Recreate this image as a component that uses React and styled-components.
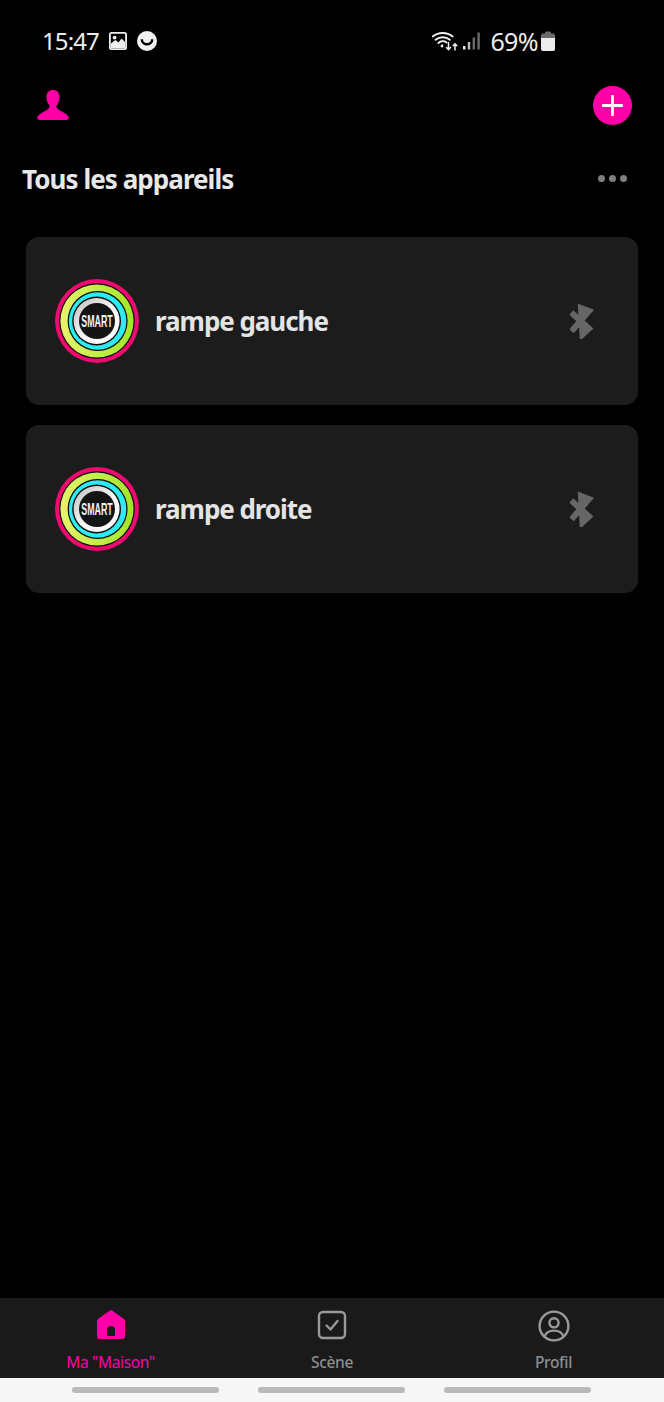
import React from 'react';
import styled, { createGlobalStyle } from 'styled-components';

const Global = createGlobalStyle`
  html, body { margin: 0; padding: 0; background: #000; }
  body { font-family: "Noto Sans", "Open Sans", sans-serif; }
`;
const Page = styled.div`
  width: 664px; height: 1402px; display: flex; flex-direction: column;
  background: #000; overflow: hidden;
`;
const Status = styled.div`
  height: 26px; margin-top: 28px; padding: 0 109px 0 42px;
  display: flex; align-items: center; justify-content: space-between;
  color: #ececec;
`;
const StatusGroup = styled.div`display: flex; align-items: center; gap: ${p => p.$gap || 0}px;`;
const Clock = styled.span`font-size: 24px; font-weight: 400; letter-spacing: -0.9px; margin-right: 10px; line-height: 26px;`;
const Percent = styled.span`font-size: 25px; font-weight: 400; letter-spacing: -0.6px; line-height: 26px; margin: 0 3px 0 10px;`;
const TopBar = styled.div`
  height: 42px; margin-top: 30px; padding: 0 32px 0 37px;
  display: flex; align-items: center; justify-content: space-between;
`;
const AddButton = styled.div`
  width: 39px; height: 39px; border-radius: 50%; background: #ff00a8;
  display: flex; align-items: center; justify-content: center;
`;
const TitleRow = styled.div`
  height: 40px; margin-top: 33px; padding: 0 37px 0 22px;
  display: flex; align-items: center; justify-content: space-between;
`;
const Title = styled.h1`
  margin: 0; font-size: 26px; font-weight: 700; color: #e8e8e8; letter-spacing: -0.95px;
`;
const Dots = styled.div`display: flex; gap: 4px; margin-top: -1px;`;
const Dot = styled.span`width: 7px; height: 7px; border-radius: 50%; background: #7f7f7f;`;
const List = styled.div`
  margin-top: 38px; padding: 0 26px; display: flex; flex-direction: column; gap: 20px;
`;
const Card = styled.div`
  height: 168px; background: #1c1c1c; border-radius: 13px;
  display: flex; align-items: center; padding: 0 44px 0 29px;
`;
const Name = styled.div`
  flex: 1; margin-left: 16px; margin-top: -1px; font-size: 26px; font-weight: 700; color: #e4e4e4; letter-spacing: -1.05px;
`;
const Spacer = styled.div`flex: 1;`;
const Nav = styled.nav`
  height: 80px; background: #1a1a1a; display: grid; grid-template-columns: 221px 222px 221px;
`;
const NavItem = styled.div`
  display: flex; flex-direction: column; align-items: center; padding-top: 12px;
  color: ${p => p.$active ? '#ff00a8' : '#8e8e8e'};
`;
const NavIconBox = styled.div`height: 32px; display: flex; justify-content: center;`;
const NavLabel = styled.span`
  margin-top: 9px; font-size: 15.5px; line-height: 22px; font-weight: ${p => p.$active ? 400 : 500}; letter-spacing: -0.35px;
`;
const Gesture = styled.div`
  height: 24px; background: #f6f6f6; display: flex; justify-content: center; gap: 39px; padding: 9px 1px 0 0; box-sizing: border-box;
`;
const Pill = styled.span`width: 147px; height: 6px; border-radius: 3px; background: #b9b9b9;`;

const PictureIcon = () => (
  <svg width="18" height="18" viewBox="0 0 18 18">
    <rect x="0" y="0" width="18" height="18" rx="2.5" fill="#f0f0f0" />
    <rect x="1.8" y="1.8" width="14.4" height="14.4" rx="0.8" fill="#000" />
    <circle cx="5.6" cy="5.6" r="1.9" fill="#f0f0f0" />
    <path d="M2 14.5 L2 11.5 L6.5 8 L9.5 10.5 L12.5 6.5 L16 10 L16 16 L2 16Z" fill="#f0f0f0" />
  </svg>
);
const SmileIcon = () => (
  <svg width="20" height="20" viewBox="0 0 20 20">
    <circle cx="10" cy="10" r="10" fill="#f0f0f0" />
    <path d="M3.6 8.2 A6.4 6.4 0 0 0 16.4 8.2 L14 8.2 A4 3.8 0 0 1 6 8.2 Z" fill="#000" />
  </svg>
);
const WifiIcon = () => (
  <svg width="26" height="20" viewBox="0 0 26 20" fill="none" stroke="#f0f0f0" strokeLinecap="round">
    <path d="M0.8 5.4 A16 16 0 0 1 20.6 5.4" strokeWidth="1.9" />
    <path d="M3.6 8.8 A11 11 0 0 1 17.8 8.8" strokeWidth="1.9" />
    <path d="M6.4 12 A6.4 6.4 0 0 1 14.6 11.4" strokeWidth="1.9" />
    <circle cx="10" cy="15" r="1.4" fill="#f0f0f0" stroke="none" />
    <path d="M16.5 11.5v7M14.5 16.6l2 2.1 2-2.1" strokeWidth="1.5" />
    <path d="M23 19v-6M21.2 14.8l1.8-2 1.8 2" strokeWidth="1.5" />
  </svg>
);
const SignalWrap = styled.div`display: flex; margin-left: 5px;`;
const SignalIcon = () => (
  <SignalWrap>
    <svg width="17" height="18" viewBox="0 0 17 18">
      <rect x="0" y="14" width="2.4" height="3.5" fill="#ececec" />
      <rect x="4.8" y="10" width="2.4" height="7.5" fill="#bdbdbd" />
      <rect x="9.6" y="5.5" width="2.4" height="12" fill="#6a6a6a" />
      <rect x="14.4" y="0.5" width="2.4" height="17" fill="#6a6a6a" />
    </svg>
  </SignalWrap>
);
const BatteryIcon = () => (
  <svg width="14" height="20" viewBox="0 0 14 20">
    <path d="M4 1.5 a1 1 0 0 1 1-1 h4 a1 1 0 0 1 1 1 v1 h2 a2 2 0 0 1 2 2 V7 H0 V4.5 a2 2 0 0 1 2-2 h2z" fill="#6a6a6a" />
    <path d="M0 7 h14 v11 a2 2 0 0 1-2 2 H2 a2 2 0 0 1-2-2z" fill="#ececec" />
  </svg>
);
const PersonIcon = () => (
  <svg width="32" height="30" viewBox="0 0 32 30">
    <path d="M16 0 C12 0 9.5 2.5 9.5 7 C9.5 11 11 14 12.5 15.5 C13 17.5 11.5 19 9 20.5 C6 22 2 24 0.6 26.5 C-0.3 28.5 1 30 3 30 H29 C31 30 32.3 28.5 31.4 26.5 C30 24 26 22 23 20.5 C20.5 19 19 17.5 19.5 15.5 C21 14 22.5 11 22.5 7 C22.5 2.5 20 0 16 0Z" fill="#ff00a8" />
  </svg>
);
const PlusIcon = () => (
  <svg width="21" height="21" viewBox="0 0 21 21">
    <path d="M10.5 1v19M1 10.5h19" stroke="#fff" strokeWidth="2.8" strokeLinecap="round" />
  </svg>
);
const RingLogo = ({ id }) => (
  <svg width="84" height="84" viewBox="0 0 84 84">
    <defs>
      <linearGradient id={`lime${id}`} x1="0" y1="0.5" x2="1" y2="0.5">
        <stop offset="0" stopColor="#e6f56a" />
        <stop offset="1" stopColor="#a0e628" />
      </linearGradient>
      <linearGradient id={`silver${id}`} x1="0" y1="0" x2="1" y2="1">
        <stop offset="0" stopColor="#bdbdbd" />
        <stop offset="0.5" stopColor="#f5f5f5" />
        <stop offset="1" stopColor="#ffffff" />
      </linearGradient>
    </defs>
    <circle cx="42" cy="42" r="42" fill="#ef0a70" />
    <circle cx="42" cy="42" r="37.8" fill="#0a0a0a" />
    <circle cx="42" cy="42" r="36.6" fill={`url(#lime${id})`} />
    <circle cx="42.6" cy="42" r="30" fill="#0a0a0a" />
    <circle cx="42.6" cy="42" r="28.8" fill="#2cecf2" />
    <circle cx="41.6" cy="42" r="24.4" fill="#0a0a0a" />
    <circle cx="41.6" cy="42" r="23" fill={`url(#silver${id})`} />
    <circle cx="42" cy="42" r="18" fill="#141414" />
    <text x="42" y="48" textAnchor="middle" fontFamily="'Liberation Sans', sans-serif" fontWeight="700" fontSize="16.5" fill="#f2f2f2" textLength="31.5" lengthAdjust="spacingAndGlyphs">SMART</text>
  </svg>
);
const BluetoothIcon = () => (
  <svg width="24" height="36" viewBox="0 0 24 36" fill="none">
    <path d="M3.5 11.5 L19 25.5 L12.5 31.5 L11 5 L19 8 L3.5 26" stroke="#666" strokeWidth="6" strokeLinejoin="miter" strokeLinecap="square" />
  </svg>
);
const HomeIcon = () => (
  <svg width="30" height="30" viewBox="0 0 30 30">
    <path fill="#ff00a8" fillRule="evenodd" d="M12.6 1.4 a3.6 3.6 0 0 1 4.8 0 L27.4 8.6 A4 4 0 0 1 29 11.6 V26 a3 3 0 0 1-3 3 H4 a3 3 0 0 1-3-3 V11.6 A4 4 0 0 1 2.6 8.6z M11 26 V20 a4 4 0 0 1 8 0 V26z" />
  </svg>
);
const SceneIcon = () => (
  <svg width="30" height="30" viewBox="0 0 30 30" fill="none" stroke="#9a9a9a" strokeWidth="2.4" strokeLinecap="round" strokeLinejoin="round">
    <rect x="2" y="2" width="26" height="26" rx="4" />
    <path d="M9.5 15.5 L13.5 19.5 L20.5 11" />
  </svg>
);
const ProfileIcon = () => (
  <svg width="32" height="32" viewBox="0 0 32 32" fill="none" stroke="#9a9a9a" strokeWidth="2.4">
    <circle cx="16" cy="16" r="14.4" />
    <circle cx="16" cy="12.8" r="4.6" />
    <path d="M6.6 26.4 C8 22 11.5 20.6 16 20.6 C20.5 20.6 24 22 25.4 26.4" />
  </svg>
);

const devices = ['rampe gauche', 'rampe droite'];

export default function App() {
  return (
    <Page>
      <Global />
      <Status>
        <StatusGroup>
          <Clock>15:47</Clock>
          <StatusGroup $gap={10}><PictureIcon /><SmileIcon /></StatusGroup>
        </StatusGroup>
        <StatusGroup>
          <WifiIcon />
          <SignalIcon />
          <Percent>69%</Percent>
          <BatteryIcon />
        </StatusGroup>
      </Status>
      <TopBar>
        <PersonIcon />
        <AddButton><PlusIcon /></AddButton>
      </TopBar>
      <TitleRow>
        <Title>Tous les appareils</Title>
        <Dots><Dot /><Dot /><Dot /></Dots>
      </TitleRow>
      <List>
        {devices.map((d, i) => (
          <Card key={d}>
            <RingLogo id={i} />
            <Name>{d}</Name>
            <BluetoothIcon />
          </Card>
        ))}
      </List>
      <Spacer />
      <Nav>
        <NavItem $active><NavIconBox><HomeIcon /></NavIconBox><NavLabel $active>Ma "Maison"</NavLabel></NavItem>
        <NavItem><NavIconBox><SceneIcon /></NavIconBox><NavLabel>Scène</NavLabel></NavItem>
        <NavItem><NavIconBox><ProfileIcon /></NavIconBox><NavLabel>Profil</NavLabel></NavItem>
      </Nav>
      <Gesture><Pill /><Pill /><Pill /></Gesture>
    </Page>
  );
}
